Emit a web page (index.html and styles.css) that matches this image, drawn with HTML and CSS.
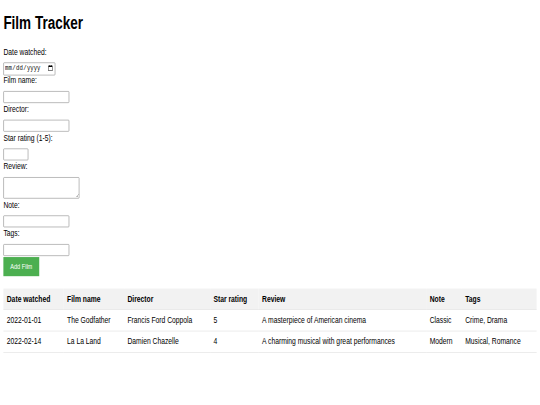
FILE: index.html
```html
<!DOCTYPE html>
<html lang="en">
<head>
<meta charset="utf-8">
<title>Film Tracker</title>
<link rel="stylesheet" href="styles.css">
</head>
<body>
<div class="screen">
<div class="page">
  <h1 class="title">Film Tracker</h1>
  <form class="film-form">
    <label class="field-label" for="date">Date watched:</label>
    <input class="field field-date" type="date" id="date">
    <label class="field-label" for="name">Film name:</label>
    <input class="field" type="text" id="name">
    <label class="field-label" for="director">Director:</label>
    <input class="field" type="text" id="director">
    <label class="field-label" for="rating">Star rating (1-5):</label>
    <input class="field field-rating" type="number" id="rating" min="1" max="5">
    <label class="field-label" for="review">Review:</label>
    <textarea class="field field-review" id="review"></textarea>
    <label class="field-label" for="note">Note:</label>
    <input class="field" type="text" id="note">
    <label class="field-label" for="tags">Tags:</label>
    <input class="field" type="text" id="tags">
    <button class="add-btn" type="button">Add Film</button>
  </form>
  <table class="films">
    <thead>
      <tr>
        <th>Date watched</th>
        <th>Film name</th>
        <th>Director</th>
        <th>Star rating</th>
        <th>Review</th>
        <th>Note</th>
        <th>Tags</th>
      </tr>
    </thead>
    <tbody>
      <tr>
        <td>2022-01-01</td>
        <td>The Godfather</td>
        <td>Francis Ford Coppola</td>
        <td>5</td>
        <td>A masterpiece of American cinema</td>
        <td>Classic</td>
        <td>Crime, Drama</td>
      </tr>
      <tr>
        <td>2022-02-14</td>
        <td>La La Land</td>
        <td>Damien Chazelle</td>
        <td>4</td>
        <td>A charming musical with great performances</td>
        <td>Modern</td>
        <td>Musical, Romance</td>
      </tr>
    </tbody>
  </table>
</div>
</div>
</body>
</html>
```
FILE: styles.css
```css
html, body {
  margin: 0;
  padding: 0;
  overflow: hidden;
  background: #fff;
}

.screen {
  width: 540px;
  height: 405px;
  overflow: hidden;
}

.page {
  width: 1280px;
  box-sizing: border-box;
  padding: 0 8px 8px;
  display: flow-root;
  transform: scale(0.421875, 0.5625);
  transform-origin: 0 0;
  font-family: "Liberation Sans", Arial, sans-serif;
  font-size: 16px;
  color: #000;
}

.title {
  font-size: 32px;
  font-weight: bold;
  margin: 21.5px 0 24px;
}

.film-form {
  margin: 0 0 22px;
}

.field-label {
  display: block;
  margin-bottom: 10px;
}

.field {
  box-sizing: border-box;
  width: 156px;
  height: 21px;
  margin: 0 0 2px;
  padding: 1px 2px;
  border: 1px solid #767676;
  border-radius: 2px;
  background: #fff;
  font-family: "Liberation Mono", monospace;
  font-size: 13.33px;
  vertical-align: top;
}

.field-date {
  width: 123px;
  height: 23px;
  margin-bottom: 0;
  color: #000;
}

.field-rating {
  width: 59px;
}

.field-review {
  width: 180px;
  height: 38px;
  resize: vertical;
}

.add-btn {
  display: block;
  margin: 0;
  background: #4caf50;
  color: #fff;
  border: none;
  padding: 9.5px 16px;
  font-family: "Liberation Sans", Arial, sans-serif;
  font-size: 13.33px;
}

.films {
  width: 100%;
  border-collapse: collapse;
}

.films th,
.films td {
  text-align: left;
  padding: 9.5px 8px;
  border-bottom: 1px solid #ddd;
}

.films th {
  background: #f2f2f2;
}
```
